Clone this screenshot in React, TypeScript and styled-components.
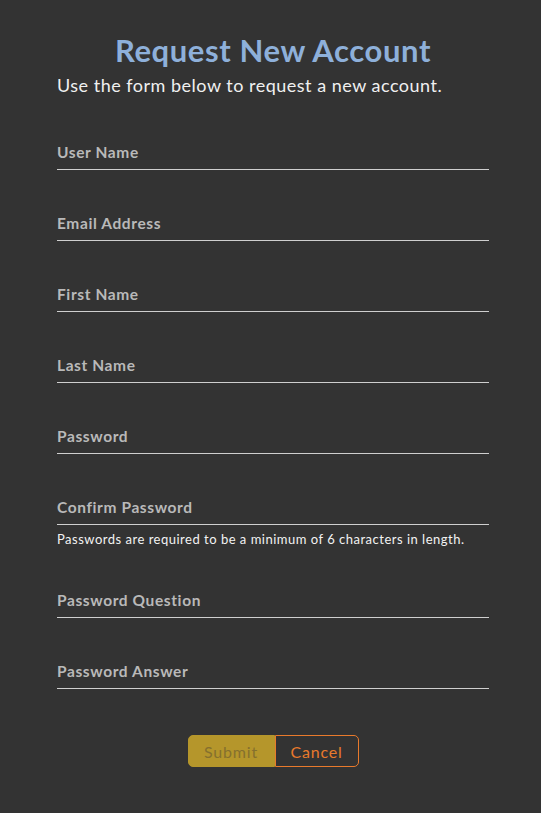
import React from 'react'
import styled, { createGlobalStyle } from 'styled-components';

const GlobalStyle = createGlobalStyle`
  html, body {
    margin: 0;
    padding: 0;
    background: #333333;
  }
  body {
    font-family: Lato, "Open Sans", sans-serif;
  }
`;

const Page = styled.div`
  width: 541px;
  min-height: 813px;
  background: #333333;
  box-sizing: border-box;
  padding: 30px 52px 0 57px;
`;

const Title = styled.h1`
  margin: 0;
  text-align: center;
  color: #8eb0da;
  font-size: 31px;
  font-weight: 700;
  line-height: 40px;
  letter-spacing: 0.6px;
`;

const Intro = styled.p`
  margin: 3px 0 0;
  color: #f0f0f0;
  font-size: 18px;
  font-weight: 400;
  line-height: 24px;
  letter-spacing: 0.5px;
`;

const Form = styled.form`
  display: flex;
  flex-direction: column;
  margin-top: 33px;
`;

const Field = styled.div<{ $help?: boolean }>`
  display: flex;
  flex-direction: column;
  margin-bottom: ${(p) => (p.$help ? '0' : '31px')};
`;

const InputBox = styled.label`
  display: flex;
  align-items: flex-end;
  height: 40px;
  padding-bottom: 8px;
  box-sizing: border-box;
  border-bottom: 1px solid #cfcfcf;
  color: #b9b9b9;
  font-size: 15.5px;
  font-weight: 700;
  letter-spacing: 0.6px;
  cursor: text;
`;

const Help = styled.div`
  margin-top: 6px;
  color: #f2f2f2;
  font-size: 13px;
  line-height: 16px;
  letter-spacing: 0.5px;
  margin-bottom: 31px;
`;

const Actions = styled.div`
  display: flex;
  justify-content: center;
  margin-top: 15px;
`;

const ActionButton = styled.button<{ $primary?: boolean }>`
  height: 32px;
  box-sizing: border-box;
  font-family: inherit;
  font-size: 16px;
  letter-spacing: 0.8px;
  padding: 0;
  cursor: pointer;
  border: 1px solid ${(p) => (p.$primary ? '#b5962b' : '#e97a2c')};
  background: ${(p) => (p.$primary ? '#b5962b' : 'transparent')};
  color: ${(p) => (p.$primary ? '#85702e' : '#e97a2c')};
  width: ${(p) => (p.$primary ? '87px' : '84px')};
  border-radius: ${(p) => (p.$primary ? '5px 0 0 5px' : '0 5px 5px 0')};
`;

const fields = [
  'User Name',
  'Email Address',
  'First Name',
  'Last Name',
  'Password',
  'Confirm Password',
  'Password Question',
  'Password Answer',
];

export default function App() {
  return (
    <Page>
      <GlobalStyle />
      <Title>Request New Account</Title>
      <Intro>Use the form below to request a new account.</Intro>
      <Form onSubmit={(e) => e.preventDefault()}>
        {fields.map((name) => (
          <Field key={name} $help={name === 'Confirm Password'}>
            <InputBox>{name}</InputBox>
            {name === 'Confirm Password' && (
              <Help>Passwords are required to be a minimum of 6 characters in length.</Help>
            )}
          </Field>
        ))}
        <Actions>
          <ActionButton type="submit" $primary>Submit</ActionButton>
          <ActionButton type="button">Cancel</ActionButton>
        </Actions>
      </Form>
    </Page>
  )
}
